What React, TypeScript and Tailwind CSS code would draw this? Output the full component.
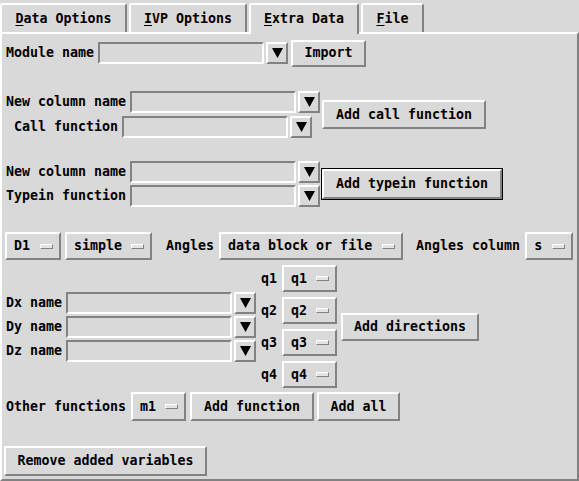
import React from "react";

const raised =
  "border-2 border-t-white border-l-white border-r-[#828282] border-b-[#828282]";
const sunken =
  "border-2 border-t-[#828282] border-l-[#828282] border-r-white border-b-white";

function Arrow() {
  return (
    <div className={`${raised} h-[22px] w-[22px] shrink-0 flex items-center justify-center`}>
      <svg width="11" height="10" viewBox="0 0 11 10">
        <polygon points="0,0 11,0 5.5,10" fill="black" />
      </svg>
    </div>
  );
}

function Combo({ w = 166 }: { w?: number }) {
  return (
    <div className="flex items-center shrink-0">
      <div className={`${sunken} h-[22px] shrink-0`} style={{ width: w }} />
      <div className="ml-[2px]">
        <Arrow />
      </div>
    </div>
  );
}

function Btn({ label, w, h = 28, className = "" }: { label: string; w: number; h?: number; className?: string }) {
  return (
    <div
      className={`${raised} flex items-center justify-center shrink-0 ${className}`}
      style={{ width: w, height: h }}
    >
      {label}
    </div>
  );
}

function Menu({ label, w, h = 28, className = "" }: { label: string; w: number; h?: number; className?: string }) {
  return (
    <div
      className={`${raised} flex items-center justify-between pl-[7px] pr-[6px] shrink-0 ${className}`}
      style={{ width: w, height: h }}
    >
      <span>{label}</span>
      <div className="h-[5px] w-[13px] border border-t-white border-l-white border-r-[#828282] border-b-[#828282] bg-[#e4e4e4]" />
    </div>
  );
}

function Tab({ label, w, selected = false }: { label: string; w: number; selected?: boolean }) {
  return (
    <div
      className={`flex items-center justify-center rounded-t-[3px] border-t-2 border-l-2 border-r-2 border-t-white border-l-white border-r-[#828282] bg-[#d9d9d9] ${
        selected ? "relative z-10 h-[31px] -mb-[2px]" : "h-[29px]"
      }`}
      style={{ width: w }}
    >
      <span className={selected ? "-mt-[2px]" : ""}>
        <span className="underline underline-offset-[2px]">{label[0]}</span>
        {label.slice(1)}
      </span>
    </div>
  );
}

export default function App() {
  return (
    <div className="w-[579px] h-[481px] bg-[#d9d9d9] text-black font-['DejaVu_Sans_Mono',monospace] text-[13.3px] font-bold leading-none whitespace-nowrap overflow-hidden flex flex-col">
      {/* Tabs */}
      <div className="flex items-end h-[32px] shrink-0">
        <Tab label="Data Options" w={127} />
        <div className="ml-[2px]">
          <Tab label="IVP Options" w={118} />
        </div>
        <div className="ml-[2px]">
          <Tab label="Extra Data" w={110} selected />
        </div>
        <div className="ml-[2px]">
          <Tab label="File" w={63} />
        </div>
      </div>

      {/* Panel */}
      <div className="h-[449px] shrink-0 border-2 border-t-white border-l-white border-r-[#828282] border-b-[#828282] flex flex-col">
        {/* Module name */}
        <div className="flex items-center h-[28px] mt-[5px] ml-[4px]">
          <span className="shrink-0">Module name</span>
          <div className="ml-[4px]">
            <Combo />
          </div>
          <Btn label="Import" w={75} h={27} className="ml-[3px]" />
        </div>

        {/* Call function */}
        <div className="flex items-center mt-[24px] ml-[4px]">
          <div className="flex flex-col items-center gap-[3px] w-[314px] shrink-0">
            <div className="flex items-center">
              <span className="mr-[4px] shrink-0">New column name</span>
              <Combo />
            </div>
            <div className="flex items-center">
              <span className="mr-[4px] shrink-0">Call function</span>
              <Combo />
            </div>
          </div>
          <Btn label="Add call function" w={164} h={29} className="ml-[2px]" />
        </div>

        {/* Typein function */}
        <div className="flex items-center mt-[23px] ml-[4px]">
          <div className="flex flex-col items-center gap-[2px] w-[314px] shrink-0">
            <div className="flex items-center">
              <span className="mr-[4px] shrink-0">New column name</span>
              <Combo />
            </div>
            <div className="flex items-center">
              <span className="mr-[4px] shrink-0">Typein function</span>
              <Combo />
            </div>
          </div>
          <div className="ml-[1px] border border-black shrink-0">
            <Btn label="Add typein function" w={180} h={30} />
          </div>
        </div>

        {/* Angles row */}
        <div className="flex items-center h-[28px] mt-[25px] ml-[3px]">
          <Menu label="D1" w={56} />
          <Menu label="simple" w={87} className="ml-[4px]" />
          <span className="ml-[14px] shrink-0">Angles</span>
          <Menu label="data block or file" w={184} className="ml-[5px]" />
          <span className="ml-[13px] shrink-0">Angles column</span>
          <Menu label="s" w={48} className="ml-[5px]" />
        </div>

        {/* Directions */}
        <div className="flex items-center mt-[5px] ml-[4px]">
          <div className="flex flex-col gap-[2px] shrink-0">
            {["Dx name", "Dy name", "Dz name"].map((l) => (
              <div key={l} className="flex items-center">
                <span className="mr-[4px] shrink-0">{l}</span>
                <Combo />
              </div>
            ))}
          </div>
          <div className="ml-[5px] flex flex-col gap-[5px] shrink-0">
            {["q1", "q2", "q3", "q4"].map((q) => (
              <div key={q} className="flex items-center">
                <span className="w-[16px] shrink-0">{q}</span>
                <Menu label={q} w={55} h={27} className="ml-[5px]" />
              </div>
            ))}
          </div>
          <Btn label="Add directions" w={138} className="ml-[4px]" />
        </div>

        {/* Other functions */}
        <div className="flex items-center h-[29px] mt-[4px] ml-[4px]">
          <span className="shrink-0">Other functions</span>
          <Menu label="m1" w={55} h={29} className="ml-[5px]" />
          <Btn label="Add function" w={124} h={29} className="ml-[4px]" />
          <Btn label="Add all" w={83} h={29} className="ml-[3px]" />
        </div>

        {/* Remove */}
        <div className="mt-[25px] ml-[2px]">
          <Btn label="Remove added variables" w={203} h={30} />
        </div>
      </div>
    </div>
  );
}
